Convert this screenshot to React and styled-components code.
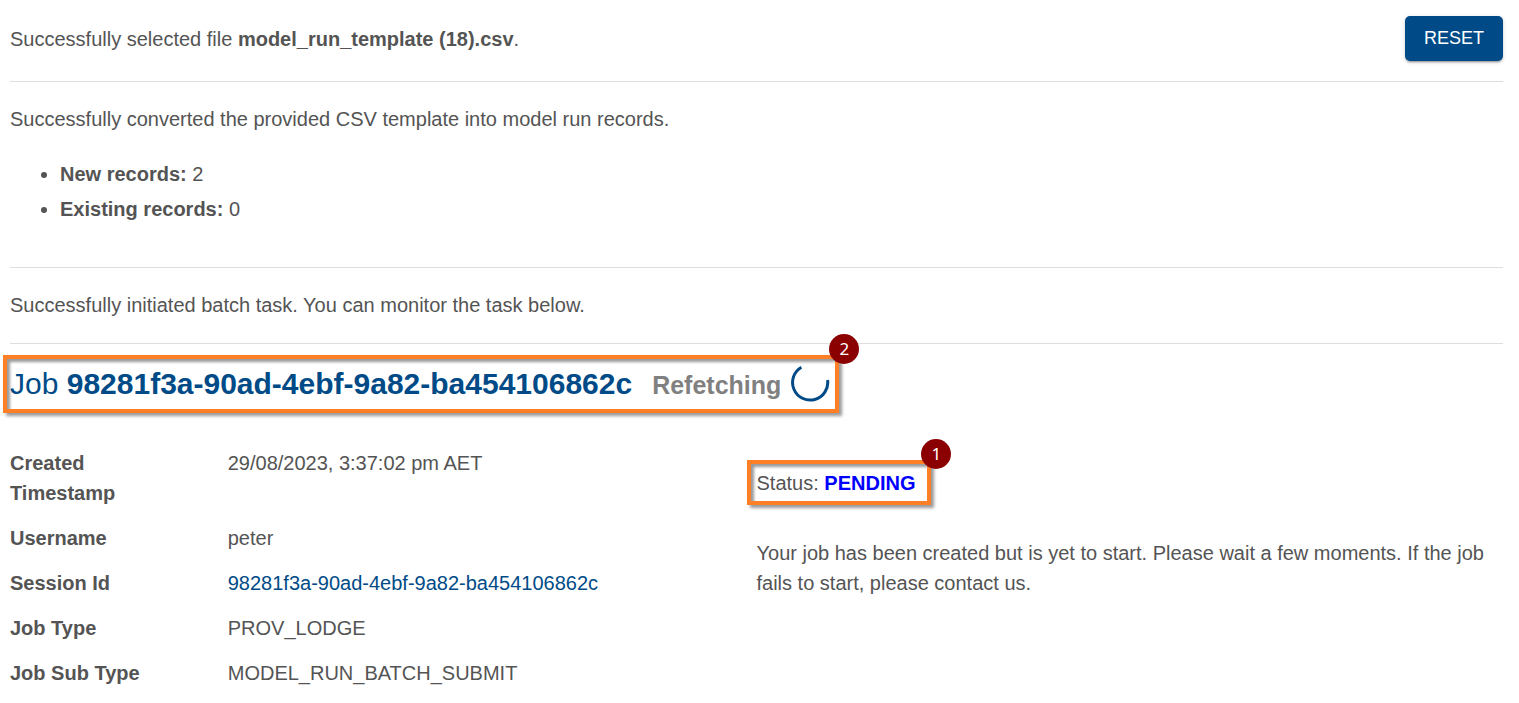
import React from "react";
import styled, { createGlobalStyle } from "styled-components";

const GlobalStyle = createGlobalStyle`
  *, *::before, *::after { box-sizing: border-box; }
  body {
    margin: 0;
    background: #ffffff;
    color: #545454;
    font-family: "Liberation Sans", Arial, sans-serif;
    font-size: 20px;
    line-height: 30px;
  }
`;

const Page = styled.main`
  padding: 16px 16px 16px 10px;
`;

const FileBar = styled.header`
  display: flex;
  align-items: center;
  justify-content: space-between;
  padding-bottom: 20px;
`;

const ResetButton = styled.button`
  border: 0;
  border-radius: 5px;
  padding: 7px 19px 8px;
  background: #004b87;
  color: #ffffff;
  font: inherit;
  font-size: 18px;
  text-transform: uppercase;
  cursor: pointer;
  box-shadow: 0 3px 1px -2px rgba(0, 0, 0, 0.2), 0 2px 2px 0 rgba(0, 0, 0, 0.14),
    0 1px 5px 0 rgba(0, 0, 0, 0.12);
`;

const Text = styled.p`
  margin: 0;
`;

const Section = styled.section`
  border-top: 1px solid #dedede;
  padding: 22px 0 23px;
`;

const RecordList = styled.ul`
  display: flex;
  flex-direction: column;
  gap: 5px;
  margin: 25px 0 20px;
  padding-left: 50px;
`;

const JobPanel = styled.section`
  border-top: 1px solid #dedede;
  padding-top: 20px;
`;

const Callout = styled.div`
  position: relative;
  display: inline-flex;
  align-items: baseline;
`;

const Frame = styled.div`
  position: absolute;
  inset: ${(p) => p.$inset};
  border: 4px solid #ff7f27;
  box-shadow: 3px 3px 3px rgba(0, 0, 0, 0.4), inset 3px 3px 3px rgba(0, 0, 0, 0.4);
  pointer-events: none;
`;

const Marker = styled.span`
  position: absolute;
  top: -25px;
  right: -24px;
  width: 30px;
  height: 30px;
  border-radius: 50%;
  background: #8b0000;
  color: #ffffff;
  font-family: "Noto Sans", sans-serif;
  font-size: 17px;
  font-weight: 400;
  line-height: 30px;
  text-align: center;
`;

const JobTitle = styled.h1`
  margin: 0;
  color: #004b87;
  font-size: 30px;
  font-weight: 400;
  line-height: 40px;
`;

const Refetching = styled.span`
  margin: 0 10px 0 20px;
  color: #808080;
  font-size: 25px;
  font-weight: 700;
`;

const Spinner = styled.svg`
  display: block;
  align-self: center;
  width: 40px;
  height: 40px;
`;

const Columns = styled.div`
  display: grid;
  grid-template-columns: 1fr 1fr;
  margin-top: 44px;
`;

const Details = styled.dl`
  display: grid;
  grid-template-columns: 7fr 17fr;
  row-gap: 15px;
  margin: 0;
`;

const Term = styled.dt`
  padding-right: 48px;
  font-weight: 700;
`;

const Value = styled.dd`
  margin: 0;
`;

const SessionLink = styled.a`
  color: #004b87;
  text-decoration: none;
`;

const StatusColumn = styled.div`
  display: flex;
  flex-direction: column;
  align-items: flex-start;
  gap: 40px;
  padding-top: 20px;
`;

const Status = styled.strong`
  color: #0000ff;
`;

const sessionId = "98281f3a-90ad-4ebf-9a82-ba454106862c";

const details = [
  ["Created Timestamp", "29/08/2023, 3:37:02 pm AET"],
  ["Username", "peter"],
  ["Session Id", <SessionLink href="#session">{sessionId}</SessionLink>],
  ["Job Type", "PROV_LODGE"],
  ["Job Sub Type", "MODEL_RUN_BATCH_SUBMIT"],
];

function Highlight({ number, inset, children }) {
  return (
    <Callout>
      {children}
      <Frame $inset={inset}>
        <Marker>{number}</Marker>
      </Frame>
    </Callout>
  );
}

export default function App() {
  return (
    <>
      <GlobalStyle />
      <Page>
        <FileBar>
          <Text>
            Successfully selected file <strong>model_run_template (18).csv</strong>.
          </Text>
          <ResetButton type="button">Reset</ResetButton>
        </FileBar>
        <Section>
          <Text>Successfully converted the provided CSV template into model run records.</Text>
          <RecordList>
            <li><strong>New records:</strong> 2</li>
            <li><strong>Existing records:</strong> 0</li>
          </RecordList>
        </Section>
        <Section>
          <Text>Successfully initiated batch task. You can monitor the task below.</Text>
        </Section>
        <JobPanel>
          <Highlight number={2} inset="-9px -8px -9px -7px">
            <JobTitle>
              Job <strong>{sessionId}</strong>
            </JobTitle>
            <Refetching>Refetching</Refetching>
            <Spinner viewBox="0 0 40 40" role="img" aria-label="Loading">
              <path
                d="M10.4 3.2A17.6 17.6 0 1 0 36.6 16"
                fill="none"
                stroke="#004b87"
                strokeWidth="3"
              />
            </Spinner>
          </Highlight>
          <Columns>
            <Details>
              {details.map(([label, value]) => (
                <React.Fragment key={label}>
                  <Term>{label}</Term>
                  <Value>{value}</Value>
                </React.Fragment>
              ))}
            </Details>
            <StatusColumn>
              <Highlight number={1} inset="-8px -16px -7px -10px">
                <Text>
                  Status: <Status>PENDING</Status>
                </Text>
              </Highlight>
              <Text>
                Your job has been created but is yet to start. Please wait a few moments. If the
                job fails to start, please contact us.
              </Text>
            </StatusColumn>
          </Columns>
        </JobPanel>
      </Page>
    </>
  );
}
